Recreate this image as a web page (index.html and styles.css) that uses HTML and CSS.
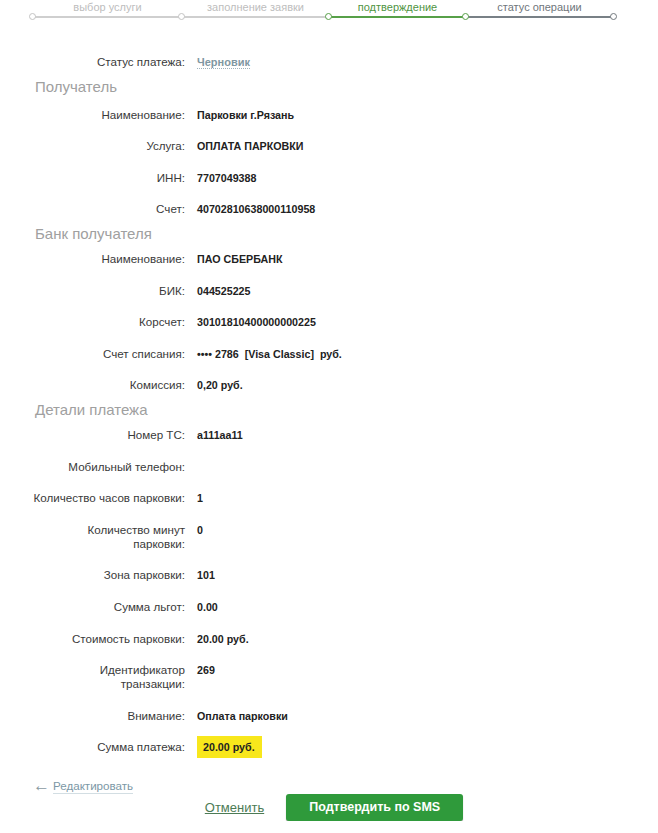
FILE: index.html
```html
<!DOCTYPE html>
<html lang="ru">
<head>
<meta charset="utf-8">
<title>Подтверждение</title>
<link rel="stylesheet" href="styles.css">
</head>
<body>
<div class="stepper">
  <div class="step step-done"><div class="step-label">выбор услуги</div><div class="track"></div></div>
  <div class="step step-done"><div class="step-label">заполнение заявки</div><div class="track"></div></div>
  <div class="step step-current"><div class="step-label">подтверждение</div><div class="track"></div></div>
  <div class="step step-next"><div class="step-label">статус операции</div><div class="track"></div></div>
</div>

<div class="content">
  <div class="row"><div class="label">Статус платежа:</div><div class="value"><span class="status">Черновик</span></div></div>

  <div class="section section-first">Получатель</div>
  <div class="row"><div class="label">Наименование:</div><div class="value">Парковки г.Рязань</div></div>
  <div class="row"><div class="label">Услуга:</div><div class="value">ОПЛАТА ПАРКОВКИ</div></div>
  <div class="row"><div class="label">ИНН:</div><div class="value">7707049388</div></div>
  <div class="row"><div class="label">Счет:</div><div class="value">40702810638000110958</div></div>

  <div class="section">Банк получателя</div>
  <div class="row"><div class="label">Наименование:</div><div class="value">ПАО СБЕРБАНК</div></div>
  <div class="row"><div class="label">БИК:</div><div class="value">044525225</div></div>
  <div class="row"><div class="label">Корсчет:</div><div class="value">30101810400000000225</div></div>
  <div class="row"><div class="label">Счет списания:</div><div class="value">•••• 2786&nbsp; [Visa Classic]&nbsp; руб.</div></div>
  <div class="row"><div class="label">Комиссия:</div><div class="value">0,20 руб.</div></div>

  <div class="section">Детали платежа</div>
  <div class="row"><div class="label">Номер ТС:</div><div class="value">а111аа11</div></div>
  <div class="row"><div class="label">Мобильный телефон:</div><div class="value"></div></div>
  <div class="row"><div class="label">Количество часов парковки:</div><div class="value">1</div></div>
  <div class="row"><div class="label">Количество минут<br>парковки:</div><div class="value">0</div></div>
  <div class="row"><div class="label">Зона парковки:</div><div class="value">101</div></div>
  <div class="row"><div class="label">Сумма льгот:</div><div class="value">0.00</div></div>
  <div class="row"><div class="label">Стоимость парковки:</div><div class="value">20.00 руб.</div></div>
  <div class="row"><div class="label">Идентификатор<br>транзакции:</div><div class="value">269</div></div>
  <div class="row"><div class="label">Внимание:</div><div class="value">Оплата парковки</div></div>
  <div class="row"><div class="label">Сумма платежа:</div><div class="value"><span class="total">20.00 руб.</span></div></div>

  <div class="edit"><span class="arrow">←</span><a class="edit-link" href="#">Редактировать</a></div>
  <div class="actions">
    <a class="cancel" href="#">Отменить</a>
    <button class="confirm" type="button">Подтвердить по SMS</button>
  </div>
</div>
</body>
</html>
```
FILE: styles.css
```css
html, body {
  margin: 0;
  padding: 0;
  background: #fff;
}
body {
  font-family: "Liberation Sans", Arial, sans-serif;
  color: #333;
}

/* stepper */
.stepper {
  display: grid;
  grid-template-columns: 149px 147px 137px 147px;
  padding-left: 33px;
  height: 24px;
}
.step {
  position: relative;
}
.step-label {
  font-size: 11px;
  line-height: 14px;
  text-align: center;
  color: #bdbdbd;
}
.track {
  height: 2px;
  margin-top: 2px;
  background: #cfcfcf;
}
.step::before {
  content: "";
  position: absolute;
  left: -4px;
  top: 13px;
  width: 5px;
  height: 5px;
  border: 1.5px solid #c4c4c4;
  border-radius: 50%;
  background: #fff;
}
.step-current .step-label { color: #4f9442; }
.step-current .track { background: #57a048; }
.step-current::before { border-color: #57a048; }
.step-next .step-label { color: #6f767b; }
.step-next .track { background: #788086; }
.step-next::before { border-color: #57a048; }
.step-next::after {
  content: "";
  position: absolute;
  right: -4px;
  top: 13px;
  width: 5px;
  height: 5px;
  border: 1.5px solid #72797e;
  border-radius: 50%;
  background: #fff;
}

/* content */
.content {
  padding-top: 22px;
}
.row {
  display: grid;
  grid-template-columns: 185px 1fr;
  column-gap: 12px;
  padding: 9px 0 8.6px;
  line-height: 14px;
}
.label {
  text-align: right;
  font-size: 11.6px;
  color: #3a3a3a;
}
.value {
  font-size: 10.7px;
  font-weight: bold;
  color: #222;
}
.section {
  padding-left: 35px;
  font-size: 15px;
  line-height: 18px;
  color: #a0a0a0;
}
.section-first {
  padding-bottom: 3px;
}
.status {
  color: #7f97a2;
  border-bottom: 1px dotted #9fb2bb;
  font-size: 11px;
}
.total {
  display: inline-block;
  background: #f8e71c;
  padding: 4px 7px 4px 6px;
  margin: -4px 0;
  line-height: 14px;
}

.edit {
  margin-top: 16px;
  padding-left: 33px;
  font-size: 11.6px;
  line-height: 14px;
  display: flex;
  align-items: center;
  gap: 3px;
}
.arrow {
  color: #8a9aa2;
  font-size: 17px;
  line-height: 14px;
}
.edit-link {
  color: #7c98a6;
  text-decoration: none;
  border-bottom: 1px solid #d3dee3;
}

.actions {
  display: flex;
  align-items: center;
  justify-content: center;
  gap: 22px;
  margin: 0 0 0 10px;
}
.cancel {
  font-size: 13px;
  color: #4c7b55;
  text-decoration: underline;
}
.confirm {
  width: 177px;
  height: 27px;
  border: none;
  border-radius: 3px;
  background: #2f9a3b;
  box-shadow: 0 1px 1px rgba(0, 0, 0, 0.35);
  color: #fff;
  font-family: "Liberation Sans", Arial, sans-serif;
  font-weight: bold;
  font-size: 12.5px;
  padding: 0;
}
```
